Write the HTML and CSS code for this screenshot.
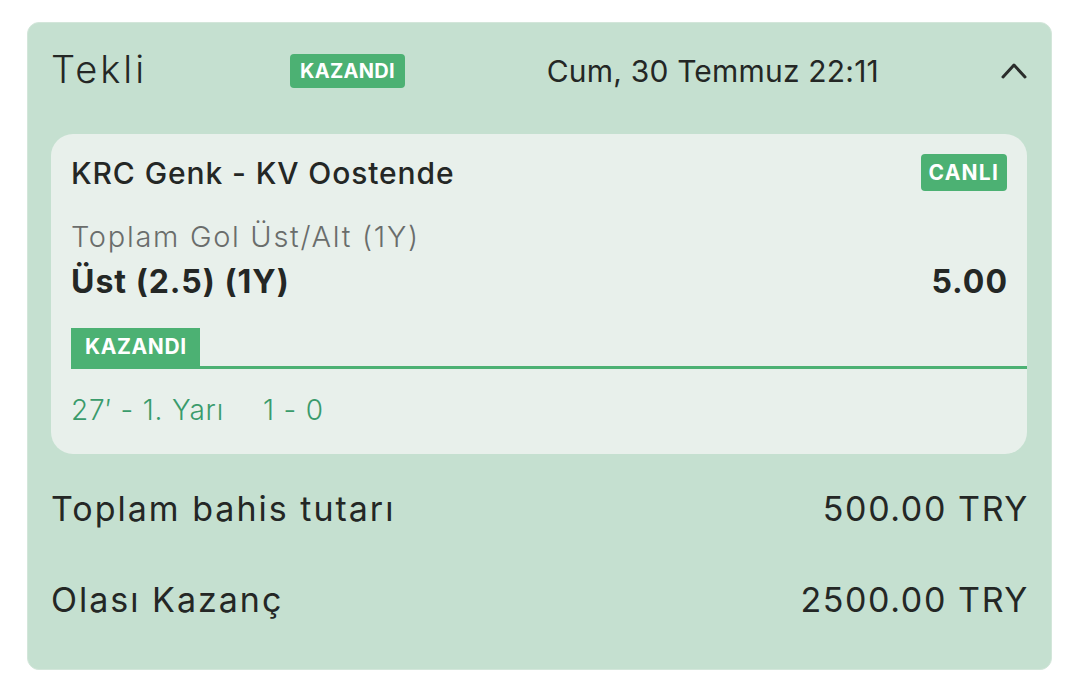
FILE: index.html
```html
<html>
<head>
  <meta charset="UTF-8">
  <meta name="viewport" content="width=device-width, initial-scale=1.0">
  <title>Kupon</title>
  <link rel="stylesheet" href="styles.css">
</head>
<body>

  <div class="slip">
    <div class="slip-head">
      <span class="slip-type">Tekli</span>
      <span class="badge">KAZANDI</span>
      <span class="slip-date">Cum, 30 Temmuz 22:11</span>
      <svg class="chevron" width="26" height="18" viewBox="0 0 26 18">
        <polyline points="2,15 13,3 24,15" fill="none" stroke="#2a2d2b" stroke-width="3" stroke-linecap="round" stroke-linejoin="round"/>
      </svg>
    </div>

    <div class="event">
      <div class="event-top">
        <span class="event-name">KRC Genk - KV Oostende</span>
        <span class="badge badge-live">CANLI</span>
      </div>
      <div class="market">Toplam Gol Üst/Alt (1Y)</div>
      <div class="pick">
        <span>Üst (2.5) (1Y)</span>
        <span class="odd">5.00</span>
      </div>
      <div class="result">
        <span class="result-tab">KAZANDI</span>
      </div>
      <div class="score">
        <span>27′ - 1. Yarı</span>
        <span>1 - 0</span>
      </div>
    </div>

    <div class="totals">
      <div class="total-row">
        <span>Toplam bahis tutarı</span>
        <span class="amount">500.00 TRY</span>
      </div>
      <div class="total-row">
        <span>Olası Kazanç</span>
        <span class="amount">2500.00 TRY</span>
      </div>
    </div>
  </div>

</body>
</html>
```

FILE: styles.css
```css
body {
  margin: 0;
  background: #fff;
  font-family: 'Inter', 'Noto Sans', sans-serif;
  color: #242725;
}

.slip {
  margin: 22px 28px 0 27px;
  padding: 0 24px 24px 23px;
  background: #c5e0d0;
  border: 1px solid #d3e6da;
  border-radius: 12px;
}

.slip-head {
  display: flex;
  align-items: center;
  height: 96px;
  margin-bottom: 15px;
}

.slip-type {
  width: 239px;
  font-size: 38px;
  font-weight: 300;
  letter-spacing: 3px;
  margin-top: -4px;
}

.badge {
  background: #4cb173;
  color: #fff;
  font-weight: 700;
  font-size: 20px;
  letter-spacing: 0.3px;
  border-radius: 4px;
  padding: 0 10px;
  height: 34px;
  line-height: 34px;
}

.slip-date {
  margin-left: auto;
  margin-right: 122px;
  font-size: 30px;
  font-weight: 400;
  letter-spacing: 0.2px;
}

.event {
  background: #e8f0eb;
  border-radius: 22px;
  padding: 20px 0 26px 20px;
}

.event-top {
  display: flex;
  justify-content: space-between;
  align-items: center;
  padding-right: 20px;
  height: 37px;
}

.event-name {
  font-size: 30px;
  font-weight: 500;
  letter-spacing: 0.9px;
}

.badge-live {
  height: 37px;
  line-height: 37px;
  padding: 0 8px;
  font-size: 21px;
  letter-spacing: 1.2px;
}

.market {
  margin-top: 28px;
  line-height: 36px;
  font-size: 29px;
  font-weight: 300;
  letter-spacing: 1.7px;
  color: #6a6d6b;
}

.pick {
  display: flex;
  justify-content: space-between;
  margin-top: 9px;
  padding-right: 20px;
  line-height: 36px;
  font-size: 32px;
  font-weight: 700;
  letter-spacing: 1px;
}

.odd {
  margin-right: -1px;
}

.result {
  margin-top: 28px;
  border-bottom: 3px solid #4cb173;
  display: flex;
}

.result-tab {
  background: #4cb173;
  color: #fff;
  font-weight: 700;
  font-size: 21px;
  letter-spacing: 0.6px;
  height: 38px;
  line-height: 38px;
  padding: 0 13px 0 14px;
}

.score {
  margin-top: 23px;
  line-height: 36px;
  font-size: 28px;
  font-weight: 300;
  letter-spacing: 0.8px;
  color: #3a9b6b;
  display: flex;
  gap: 39px;
}

.totals {
  margin-top: 9px;
}

.total-row {
  display: flex;
  justify-content: space-between;
  align-items: center;
  height: 91px;
  font-size: 34px;
  font-weight: 400;
  letter-spacing: 2px;
}

.amount {
  letter-spacing: 1.6px;
  margin-right: -2px;
}
```
